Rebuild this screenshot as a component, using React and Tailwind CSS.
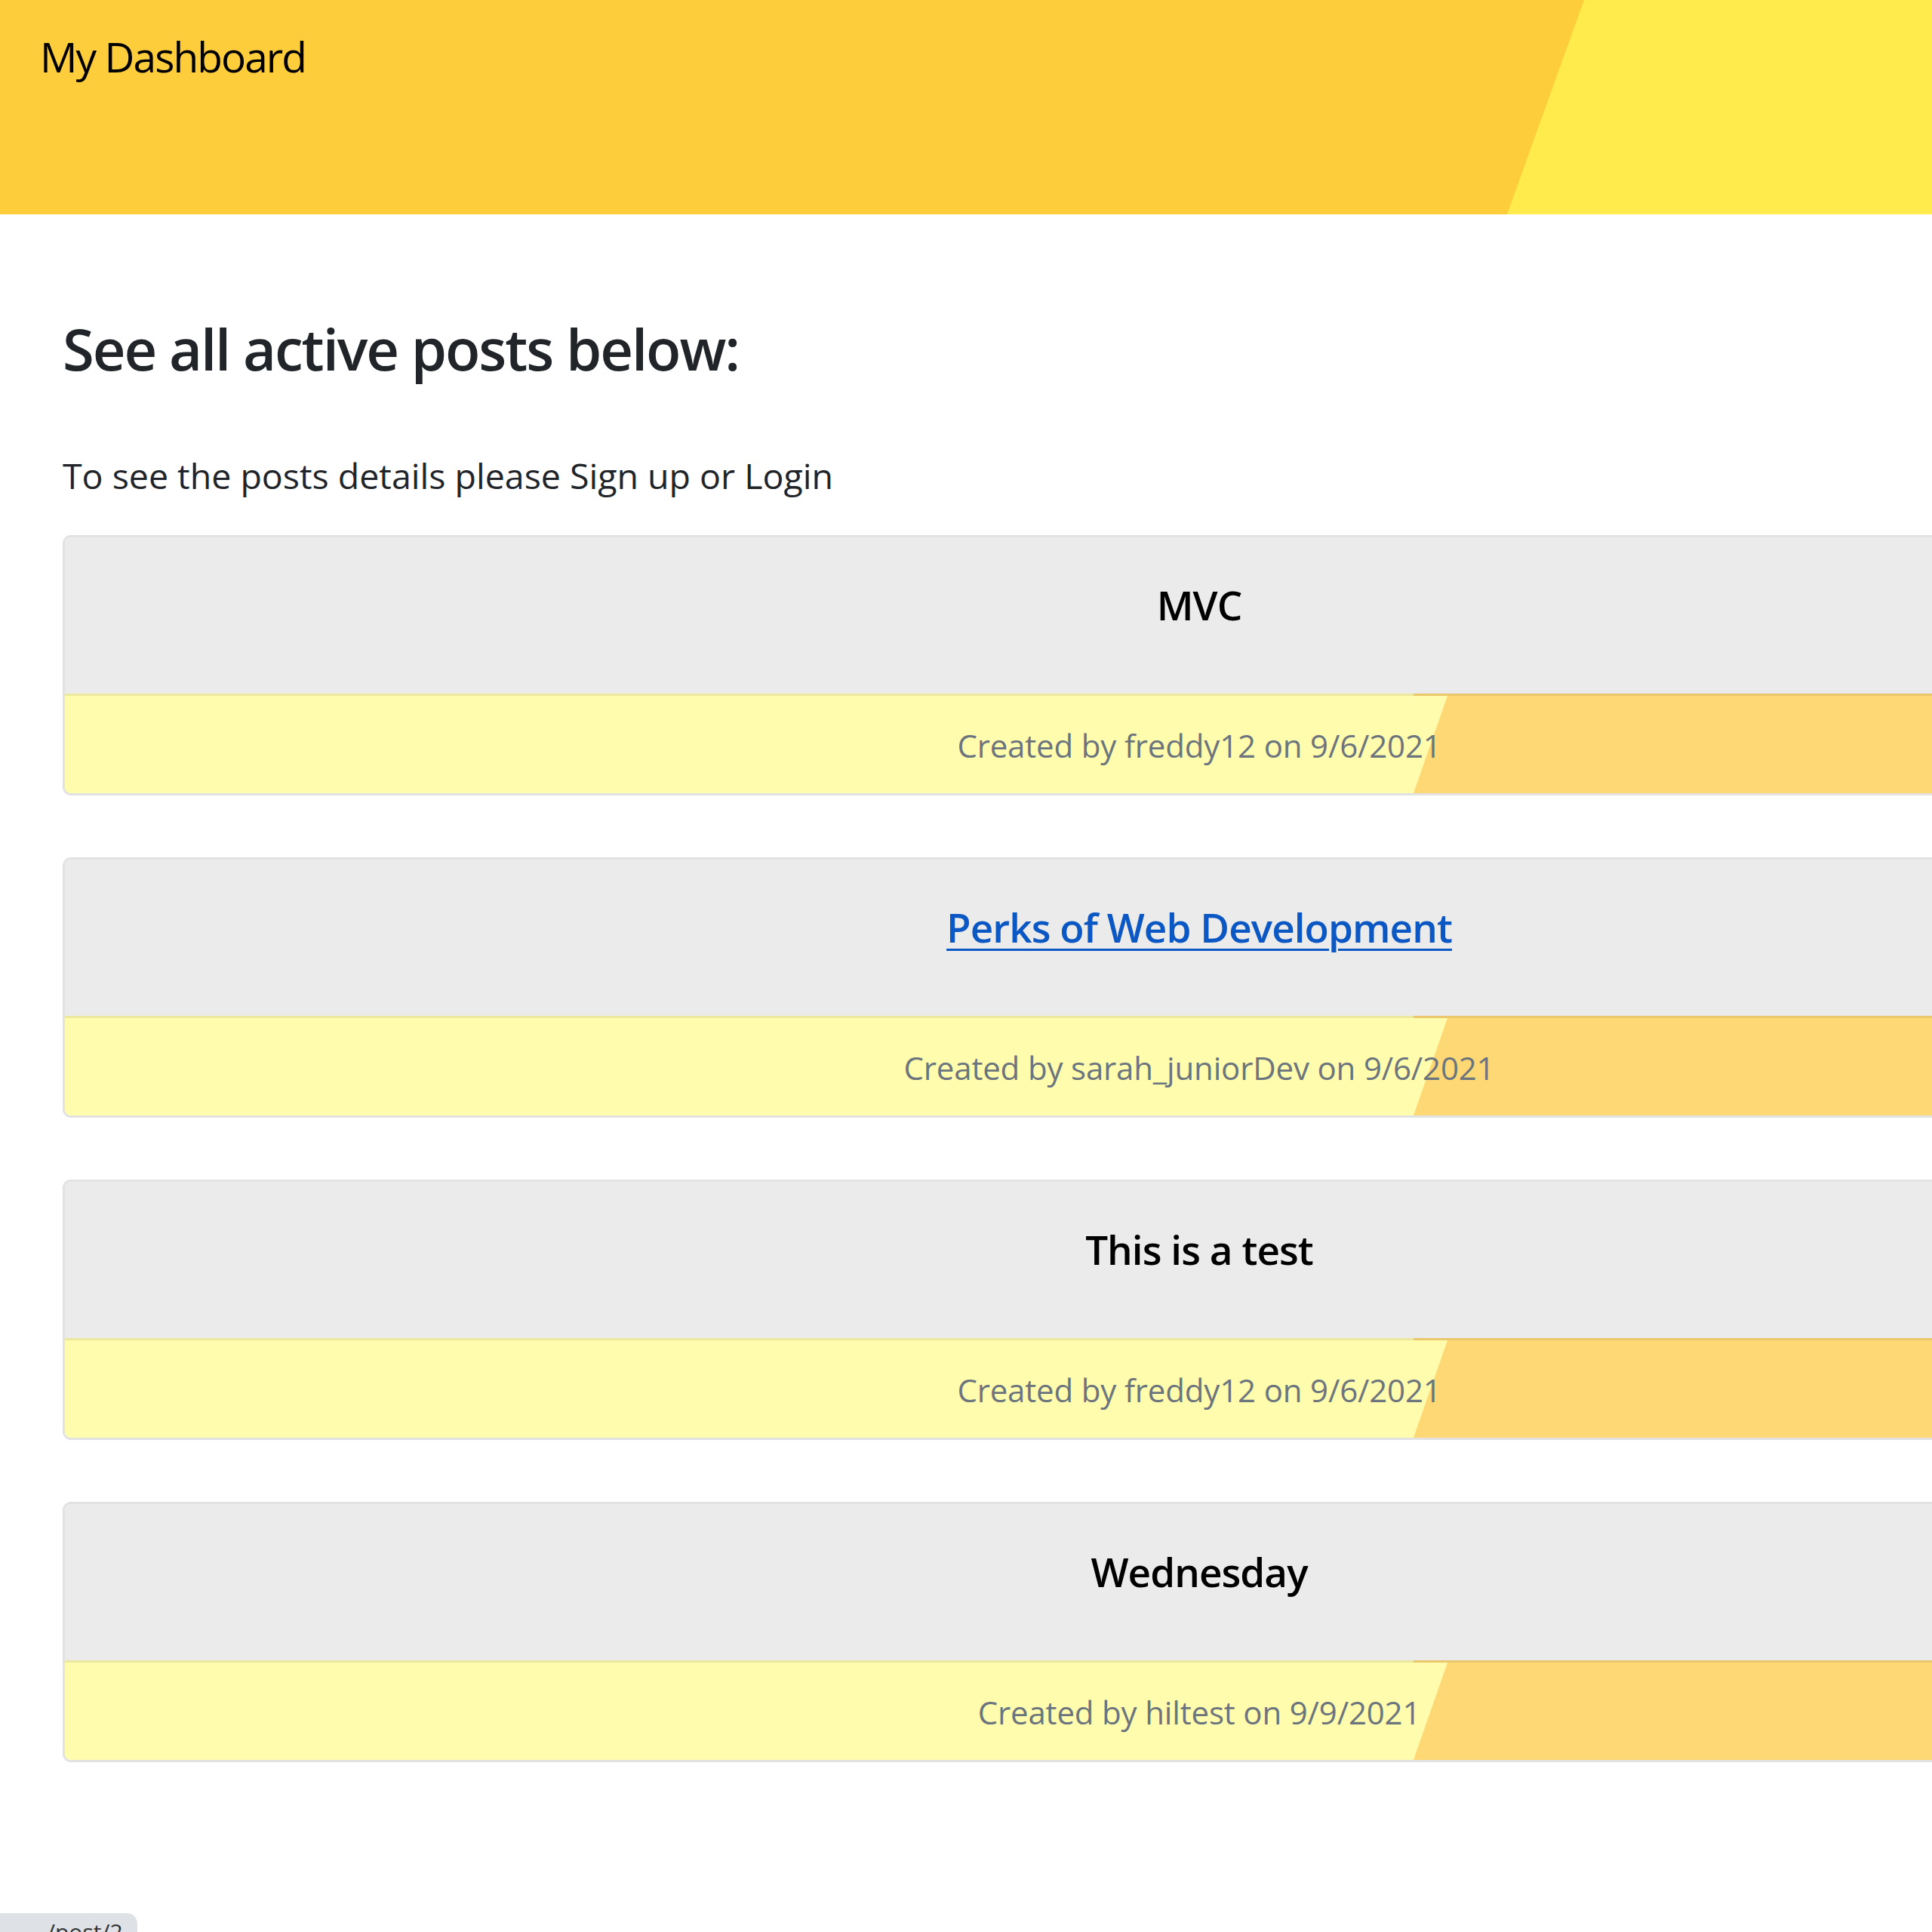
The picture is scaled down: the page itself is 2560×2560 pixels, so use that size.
import React from 'react';

const posts = [
    { id: 1, title: 'MVC', author: 'freddy12', date: '9/6/2021' },
    { id: 2, title: 'Perks of Web Development', author: 'sarah_juniorDev', date: '9/6/2021', link: true },
    { id: 3, title: 'This is a test', author: 'freddy12', date: '9/6/2021' },
    { id: 4, title: 'Wednesday', author: 'hiltest', date: '9/9/2021' },
];

const PostCard = ({ post }) => (
    <div className="w-[3012px] mb-[82px] border-[3px] border-[#e2e2e2] rounded-[11px] overflow-hidden">
        {/* card header */}
        <div className="h-[207px] bg-[#ebebeb] flex items-center justify-center pb-[28px]">
            {post.link ? (
                <a href="#" className="text-[53px] font-semibold tracking-[-0.018em] text-[#0b57c4] underline decoration-[3px] underline-offset-[8px]">
                    {post.title}
                </a>
            ) : (
                <h5 className="text-[53px] font-semibold tracking-[-0.018em] text-black">{post.title}</h5>
            )}
        </div>

        {/* footer with the slanted orange block */}
        <div className="relative h-[132px] bg-[#fffcad] flex items-center justify-center pt-[6px]">
            <div className="absolute inset-0 bg-[#ffd876] [clip-path:polygon(1787px_0,100%_0,100%_100%,1787px_100%,1832px_3px,1787px_3px)]" />
            <div className="absolute top-0 inset-x-0 h-[3px] bg-black/[0.08]" />
            <p className="relative text-[42px] tracking-[-0.004em] text-[#6c757d]">
                Created by {post.author} on {post.date}
            </p>
        </div>
    </div>
);

const App = () => {
    return (
        <div className="relative w-[2560px] h-[2560px] overflow-hidden bg-white font-['Open_Sans','Noto_Sans',sans-serif] text-[#212529]">
            <header className="relative h-[284px] bg-[#fdcd3c]">
                <div className="absolute inset-0 bg-[#ffeb4b] [clip-path:polygon(2099px_0,100%_0,100%_100%,1997px_100%)]" />
                <div className="relative pl-[53px] pt-[34px] text-[55px] tracking-[-0.035em] text-black">My Dashboard</div>
            </header>

            <main className="pl-[83px] pt-[132px]">
                <h3 className="text-[76px] font-semibold tracking-[-0.027em] leading-[1.2]">See all active posts below:</h3>
                <p className="mt-[89px] text-[46.5px] leading-[1.5]">To see the posts details please Sign up or Login</p>

                <div className="mt-[43px]">
                    {posts.map((post) => (
                        <PostCard key={post.id} post={post} />
                    ))}
                </div>
            </main>

            {/* browser link preview bubble */}
            <div className="absolute left-0 bottom-0 w-[182px] h-[25px] overflow-hidden bg-[#dee1e6] rounded-tr-[14px]">
                <span className="block pl-[62px] pt-[10px] text-[30px] leading-none text-[#333]">/post/2</span>
            </div>
        </div>
    );
};

export default App;
